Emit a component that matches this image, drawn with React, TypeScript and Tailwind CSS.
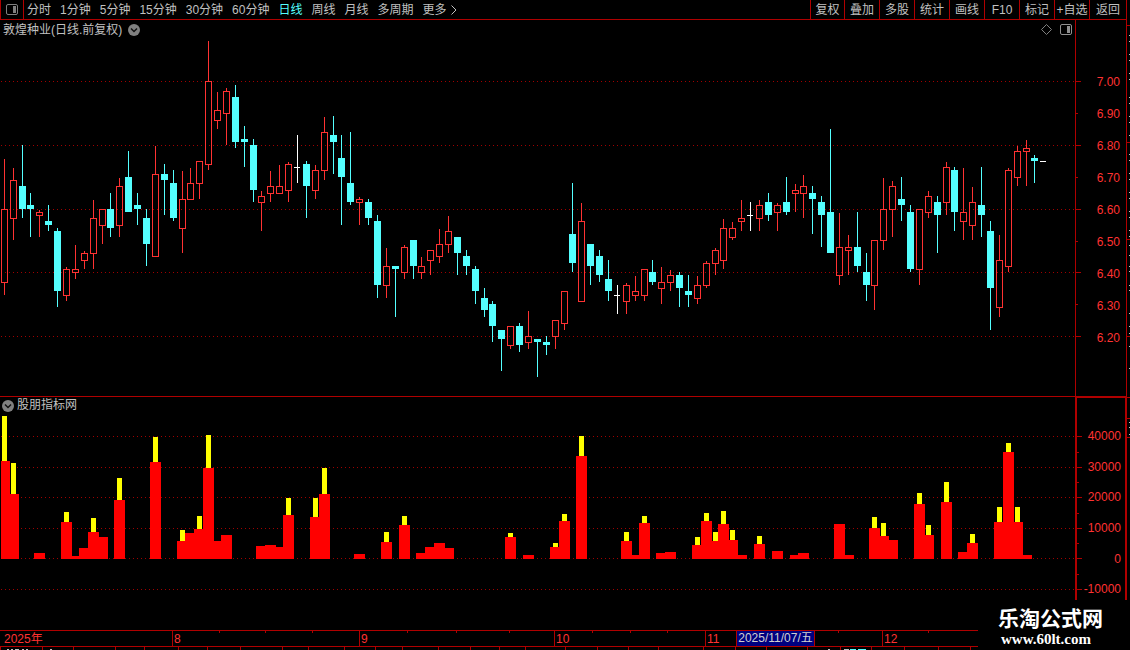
import { useState } from 'react';

type Kind = 'up' | 'down' | 'flat';
type Candle = [x: number, high: number, top: number, bottom: number, low: number, kind: Kind];
type Bar = [x: number, top: number, peak?: number];

const U: Kind = 'up';
const D: Kind = 'down';
const F: Kind = 'flat';

const CANDLES: Candle[] = [
  [4, 159, 209, 283, 295, U], [13, 168, 180, 219, 240, U], [22, 145, 186, 209, 218, D],
  [30, 193, 205, 209, 237, D], [39, 210, 212, 216, 237, U], [48, 205, 221, 225, 231, D],
  [57, 228, 231, 291, 307, D], [66, 267, 269, 296, 301, U], [75, 245, 269, 273, 279, U],
  [84, 251, 253, 261, 269, U], [93, 200, 218, 254, 269, U], [102, 209, 209, 226, 244, U],
  [110, 193, 209, 228, 237, D], [119, 178, 186, 226, 237, U], [128, 151, 177, 212, 212, D],
  [137, 193, 205, 209, 225, D], [146, 209, 218, 244, 266, D], [155, 146, 174, 257, 257, U],
  [164, 164, 174, 180, 215, D], [173, 170, 183, 218, 221, D], [182, 171, 199, 229, 253, U],
  [190, 168, 183, 200, 200, U], [199, 161, 161, 184, 199, U], [208, 41, 81, 165, 170, U],
  [217, 92, 110, 121, 129, U], [226, 88, 91, 114, 145, U], [235, 85, 97, 142, 148, D],
  [244, 126, 139, 142, 167, D], [253, 139, 145, 190, 202, D], [261, 191, 196, 203, 231, U],
  [270, 171, 186, 194, 202, U], [279, 165, 186, 194, 194, U], [288, 162, 164, 191, 202, U],
  [297, 135, 167, 168, 183, F], [306, 161, 164, 186, 218, D], [315, 165, 170, 191, 199, U],
  [324, 117, 132, 171, 180, U], [333, 116, 135, 142, 174, D], [341, 135, 158, 177, 225, D],
  [350, 132, 183, 202, 205, D], [359, 197, 199, 203, 225, U], [368, 199, 202, 218, 225, D],
  [377, 215, 221, 285, 298, D], [386, 248, 266, 286, 298, U], [395, 266, 266, 269, 317, D],
  [404, 245, 247, 273, 279, U], [413, 240, 240, 266, 279, D], [421, 257, 266, 273, 279, U],
  [430, 250, 250, 261, 275, U], [439, 229, 244, 257, 263, U], [448, 216, 231, 245, 253, U],
  [457, 237, 237, 253, 275, D], [466, 250, 256, 266, 275, D], [475, 266, 269, 291, 304, D],
  [484, 288, 298, 310, 317, D], [492, 301, 304, 326, 342, D], [501, 330, 330, 339, 371, D],
  [510, 326, 326, 346, 349, U], [519, 323, 326, 345, 352, D], [528, 311, 336, 343, 349, U],
  [537, 339, 339, 342, 377, D], [546, 336, 342, 345, 355, D], [555, 320, 320, 337, 349, U],
  [564, 291, 291, 324, 330, U], [572, 183, 234, 263, 272, D], [581, 203, 221, 302, 302, U],
  [590, 244, 244, 266, 285, D], [599, 250, 256, 275, 282, D], [608, 260, 279, 291, 301, D],
  [617, 285, 295, 296, 314, F], [626, 283, 285, 302, 314, U], [635, 276, 291, 296, 301, U],
  [644, 269, 269, 296, 301, U], [652, 260, 272, 282, 285, D], [661, 267, 282, 289, 304, U],
  [670, 270, 275, 283, 291, U], [679, 272, 275, 288, 307, D], [688, 275, 291, 295, 307, D],
  [697, 276, 285, 299, 304, U], [706, 261, 263, 286, 288, U], [715, 248, 250, 264, 275, U],
  [723, 219, 228, 261, 269, U], [732, 222, 228, 238, 240, U], [741, 200, 218, 222, 231, U],
  [750, 202, 215, 216, 231, F], [759, 200, 205, 219, 231, U], [768, 193, 202, 215, 221, D],
  [777, 203, 205, 213, 231, U], [786, 177, 202, 212, 215, D], [795, 184, 190, 194, 212, U],
  [803, 175, 186, 194, 218, U], [812, 186, 193, 199, 234, D], [821, 196, 202, 215, 247, D],
  [830, 129, 212, 253, 253, D], [839, 213, 247, 276, 285, U], [848, 235, 247, 251, 275, U],
  [857, 212, 247, 266, 272, D], [866, 253, 272, 285, 301, D], [874, 240, 240, 286, 310, U],
  [883, 178, 209, 241, 250, U], [892, 181, 186, 210, 237, U], [901, 177, 199, 205, 221, D],
  [910, 205, 212, 269, 272, D], [919, 209, 209, 270, 285, U], [928, 191, 196, 213, 218, U],
  [937, 196, 202, 215, 253, D], [946, 162, 167, 203, 215, U], [954, 167, 170, 212, 231, D],
  [963, 168, 212, 222, 240, U], [972, 187, 202, 226, 240, U], [981, 167, 205, 215, 237, D],
  [990, 221, 231, 288, 330, D], [999, 235, 260, 308, 317, U], [1008, 168, 170, 267, 272, U],
  [1017, 146, 151, 178, 186, U], [1026, 140, 148, 152, 186, U], [1034, 155, 158, 161, 183, D],
  [1043, 161, 161, 162, 162, F],
];

const BARS: Bar[] = [
  [4, 461, 416], [13, 494, 463], [39, 553], [66, 522, 512], [75, 556], [84, 548], [93, 532, 518],
  [102, 537], [119, 500, 478], [155, 462, 437], [182, 541, 530], [190, 533], [199, 529, 516],
  [208, 468, 435], [217, 541], [226, 535], [261, 546], [270, 545], [279, 547], [288, 515, 498],
  [315, 517, 498], [324, 494, 468], [359, 554], [386, 542, 532], [404, 525, 516], [421, 553],
  [430, 547], [439, 543], [448, 548], [510, 537, 533], [528, 555], [555, 547, 543],
  [564, 521, 514], [581, 456, 436], [626, 541, 532], [635, 555], [644, 523, 516], [661, 553],
  [670, 552], [697, 545, 537], [706, 521, 513], [715, 541, 532], [723, 524, 511],
  [732, 540, 530], [741, 555], [759, 544, 536], [777, 551], [795, 555], [803, 553], [839, 524],
  [848, 555], [874, 528, 517], [883, 536, 523], [892, 540], [919, 504, 493], [928, 535, 525],
  [946, 502, 482], [963, 552], [972, 543, 534], [999, 522, 507], [1008, 452, 443],
  [1017, 522, 507], [1026, 555],
];

const BASELINE = 559;
const PRICE_GRID = [81, 145, 209, 272, 336];
const PRICE_MINOR = [113, 177, 241, 304];
const PRICE_LABELS = ['7.00', '6.90', '6.80', '6.70', '6.60', '6.50', '6.40', '6.30', '6.20'];
const VOLUME_GRID = [436, 467, 497, 528, 558, 589];
const VOLUME_MINOR = [452, 482, 513, 543, 574];
const VOLUME_LABELS = ['40000', '30000', '20000', '10000', '0', '-10000'];
const MONTHS = ['2025年', '8', '9', '10', '11', '12'];
const WEEK_TICKS = [219, 265, 312, 407, 456, 509, 592, 630, 667, 838, 928];
const FOOTER_TICKS = [
  0, 42, 73, 115, 144, 178, 207, 240, 282, 308, 344, 375, 402, 438, 470, 499, 525, 565, 597, 628,
  658, 703, 735, 766, 807, 840, 871, 904, 938, 970,
];
const FOOTER_MARKS = [7, 11, 15, 17, 22, 26, 50, 828];
const SIDE_MARKS = [
  35, 41, 54, 60, 73, 79, 97, 103, 116, 122, 135, 154, 160, 173, 179, 192, 198, 211, 217, 230, 236,
  245, 255, 266, 271, 285, 290, 313, 326, 333, 346, 368, 422, 427, 434,
];
const SIDE_TICKS = [25, 142, 239, 336, 397, 418, 437];

const PERIODS = ['分时', '1分钟', '5分钟', '15分钟', '30分钟', '60分钟', '日线', '周线', '月线', '多周期', '更多'];
const TOOLS = ['复权', '叠加', '多股', '统计', '画线', 'F10', '标记', '+自选', '返回'];

function PanelIcon() {
  return (
    <svg width="12" height="11" viewBox="0 0 12 11" fill="none" aria-hidden="true">
      <rect x="0.5" y="0.5" width="11" height="10" rx="1.5" stroke="currentColor" />
      <rect x="7" y="2" width="3" height="7" fill="currentColor" />
    </svg>
  );
}

function ChevronDisc() {
  return (
    <svg width="12" height="12" viewBox="0 0 12 12" aria-hidden="true">
      <circle cx="6" cy="6" r="6" fill="#808080" />
      <path d="M3 4.5 6 7.5 9 4.5" fill="none" stroke="#101010" strokeWidth="1.5" />
    </svg>
  );
}

function GridLines({ rows }: { rows: number[] }) {
  return (
    <g stroke="#a00000" strokeDasharray="1 3">
      {rows.map((y) => (
        <line key={y} x1="1" x2="1075" y1={y + 0.5} y2={y + 0.5} />
      ))}
    </g>
  );
}

function CandleMark({ candle }: { candle: Candle }) {
  const [x, high, top, bottom, low, kind] = candle;
  if (kind === 'flat') {
    return (
      <g fill="#ffffff">
        <rect x={x} y={high} width="1" height={low - high} />
        <rect x={x - 3} y={top} width="6" height="1" />
      </g>
    );
  }
  if (kind === 'down') {
    return (
      <g fill="#54ffff">
        <rect x={x} y={high} width="1" height={low - high} />
        <rect x={x - 3} y={top} width="7" height={bottom - top} />
      </g>
    );
  }
  return (
    <g fill="#ff3232">
      <rect x={x} y={high} width="1" height={top - high} />
      <rect x={x} y={bottom} width="1" height={Math.max(0, low - bottom)} />
      <rect x={x - 2.5} y={top + 0.5} width="6" height={bottom - top - 1} fill="none" stroke="#ff3232" />
    </g>
  );
}

function AxisTicks({ box, major, minor }: { box: string; major: number[]; minor: number[] }) {
  return (
    <svg className="h-full w-[5px] shrink-0" viewBox={box} preserveAspectRatio="none" shapeRendering="crispEdges" fill="#b00000" aria-hidden="true">
      {major.map((y) => (
        <rect key={y} x="0" y={y} width="5" height="1" />
      ))}
      {minor.map((y) => (
        <rect key={y} x="0" y={y} width="2" height="1" />
      ))}
    </svg>
  );
}

export default function App() {
  const [period, setPeriod] = useState('日线');

  return (
    <div className="flex h-screen overflow-hidden bg-black font-['Liberation_Sans','Noto_Sans_CJK_SC',sans-serif] text-xs text-[#c0c0c0]">
      <div className="grid min-w-0 flex-1 grid-rows-[20px_minmax(0,376fr)_minmax(0,234fr)_16px_4px]">
        <header className="flex justify-between border-b border-[#b00000]">
          <nav className="flex whitespace-nowrap">
            <button aria-label="侧栏" className="flex w-6 items-center justify-center border-x border-[#b00000] text-[#808080]">
              <PanelIcon />
            </button>
            <div className="flex items-center gap-[9px] pl-[3px]">
              {PERIODS.map((name) => (
                <button
                  key={name}
                  onClick={() => setPeriod(name)}
                  className={name === period ? 'text-[#54ffff]' : 'text-[#c0c0c0]'}
                >
                  {name}
                </button>
              ))}
            </div>
            <svg className="ml-1 self-center" width="6" height="10" viewBox="0 0 6 10" fill="none" stroke="#c0c0c0" aria-hidden="true">
              <path d="M0.5 0.5 5 5 0.5 9.5" />
            </svg>
          </nav>
          <div className="grid grid-cols-[34px_repeat(7,35px)_37px] whitespace-nowrap">
            {TOOLS.map((name) => (
              <button key={name} className="border-l border-[#b00000] text-center">
                {name}
              </button>
            ))}
          </div>
        </header>

        <section className="flex min-h-0">
          <div className="relative min-w-0 flex-1">
            <svg className="block h-full w-full" viewBox="0 20 1075 376" preserveAspectRatio="none" shapeRendering="crispEdges" role="img" aria-label="日线">
              <GridLines rows={PRICE_GRID} />
              {CANDLES.map((candle) => (
                <CandleMark key={candle[0]} candle={candle} />
              ))}
            </svg>
            <div className="absolute inset-x-0 top-0 flex h-[19px] items-center justify-between pr-[3px] pl-[3px]">
              <h1 className="flex items-center gap-1.5">
                敦煌种业(日线.前复权)
                <ChevronDisc />
              </h1>
              <div className="flex items-center gap-2 text-[#909090]">
                <svg width="11" height="11" viewBox="0 0 11 11" fill="none" stroke="#808080" aria-hidden="true">
                  <path d="M5.5 0.5 10.5 5.5 5.5 10.5 0.5 5.5Z" />
                </svg>
                <PanelIcon />
              </div>
            </div>
          </div>
          <div className="flex w-[51px] border-l border-[#b00000]">
            <AxisTicks box="0 20 5 376" major={PRICE_GRID} minor={PRICE_MINOR} />
            <div className="grid flex-1 grid-rows-[46fr_repeat(9,32fr)_42fr] items-center pr-1.5 text-right leading-4 text-[#ff3232]">
              <span />
              {PRICE_LABELS.map((label) => (
                <span key={label}>{label}</span>
              ))}
            </div>
          </div>
        </section>

        <section className="flex min-h-0">
          <div className="relative min-w-0 flex-1 border-t border-[#b00000]">
            <svg className="block h-full w-full" viewBox="0 397 1075 233" preserveAspectRatio="none" shapeRendering="crispEdges" role="img" aria-label="股朋指标网">
              <GridLines rows={VOLUME_GRID} />
              {BARS.map(([x, top]) => (
                <rect key={x} x={Math.max(1, x - 5)} y={top} width={x + 6 - Math.max(1, x - 5)} height={BASELINE - top} fill="#ff0000" />
              ))}
              {BARS.map(([x, top, peak]) =>
                peak === undefined ? null : (
                  <rect key={x} x={x - 2} y={peak} width="5" height={top - peak} fill="#ffff00" />
                ),
              )}
            </svg>
            <h2 className="absolute top-0 left-0.5 flex items-center gap-[3px] leading-[17px]">
              <ChevronDisc />
              股朋指标网
            </h2>
          </div>
          <div className="flex w-[51px] border-t-2 border-r border-l-2 border-[#b00000]">
            <AxisTicks box="0 398 5 232" major={VOLUME_GRID} minor={VOLUME_MINOR} />
            <div className="grid flex-1 grid-rows-[115fr_repeat(6,153fr)_127fr] items-center pr-1 text-right leading-4 text-[#ff3232]">
              <span />
              {VOLUME_LABELS.map((label) => (
                <span key={label} className="flex justify-end">{label}</span>
              ))}
            </div>
          </div>
        </section>

        <div className="relative border-t border-[#b00000]">
          <svg className="absolute inset-0 h-full w-full" viewBox="0 0 1126 15" preserveAspectRatio="none" shapeRendering="crispEdges" fill="#b00000" aria-hidden="true">
            {WEEK_TICKS.map((x) => (
              <rect key={x} x={x} y="0" width="1" height="2" />
            ))}
          </svg>
          <div className="grid h-full grid-cols-[172fr_187fr_195fr_151fr_177fr_244fr] leading-4 text-[#ff3232]">
            {MONTHS.map((month, i) => (
              <span key={month} className={i === 0 ? 'pl-1' : 'border-l border-[#b00000] pl-px'}>
                {month}
              </span>
            ))}
          </div>
          <span className="absolute top-0 left-[736px] h-[15px] w-[79px] border-x border-[#b00000] bg-[#000080] text-center leading-[15px] whitespace-nowrap text-[#d0d0d0]">
            2025/11/07/五
          </span>
        </div>

        <svg className="block h-full w-full" viewBox="0 646 1126 4" preserveAspectRatio="none" shapeRendering="crispEdges" fill="#b00000" aria-hidden="true">
          <rect x="0" y="646" width="1126" height="1" />
          {FOOTER_TICKS.map((x) => (
            <rect key={x} x={x} y="647" width="1" height="3" />
          ))}
          {FOOTER_MARKS.map((x) => (
            <rect key={x} x={x} y="649" width="2" height="1" fill="#c0c0c0" />
          ))}
          <rect x="844" y="649" width="5" height="1" fill="#c0c0c0" />
          <rect x="850" y="649" width="6" height="1" fill="#54ffff" />
          <rect x="858" y="649" width="8" height="1" fill="#54ffff" />
        </svg>
      </div>

      <svg className="h-full w-1 shrink-0 border-l border-[#b00000]" viewBox="0 0 3 650" preserveAspectRatio="none" shapeRendering="crispEdges" aria-hidden="true">
        {SIDE_TICKS.map((y) => (
          <rect key={y} x="0" y={y} width="3" height="1" fill="#b00000" />
        ))}
        {SIDE_MARKS.map((y) => (
          <rect key={y} x="2" y={y} width="1" height="1" fill="#c0c0c0" />
        ))}
      </svg>

      <div className="absolute right-0 bottom-0 flex h-[50px] w-[152px] flex-col bg-black pt-[7px] pl-5 font-bold text-white">
        <span className="text-[21px] leading-6">乐淘公式网</span>
        <a href="http://www.60lt.com" className="pl-[3px] font-['Liberation_Serif',serif] text-[15px] leading-4">
          www.60lt.com
        </a>
      </div>
    </div>
  );
}
